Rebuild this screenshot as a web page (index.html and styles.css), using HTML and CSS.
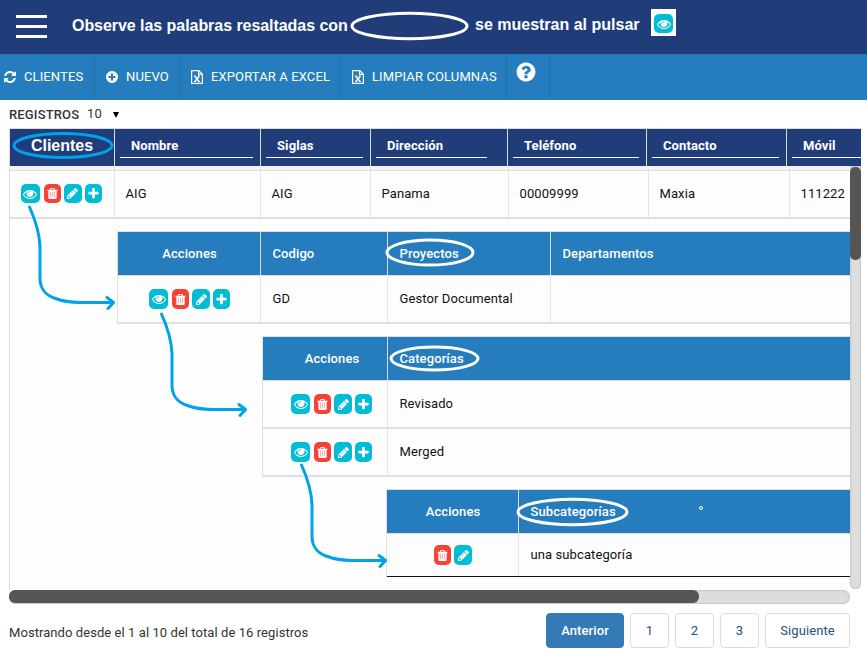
FILE: index.html
```html
<!DOCTYPE html>
<html lang="es">
<head>
<meta charset="utf-8">
<title>Clientes</title>
<link rel="stylesheet" href="styles.css">
</head>
<body>
<svg class="sprite" aria-hidden="true">
  <symbol id="eye" viewBox="0 0 1792 1792"><path d="M1664 960q-152-236-381-353 61 104 61 225 0 185-131.5 316.5t-316.5 131.5-316.5-131.5-131.5-316.5q0-121 61-225-229 117-381 353 133 205 333.5 326.5t434.5 121.5 434.5-121.5 333.5-326.5zm-720-384q0-20-14-34t-34-14q-125 0-214.5 89.5t-89.5 214.5q0 20 14 34t34 14 34-14 14-34q0-86 61-147t147-61q20 0 34-14t14-34zm848 384q0 34-20 69-140 230-376.5 368.5t-499.5 138.5-499.5-139-376.5-368q-20-35-20-69t20-69q140-229 376.5-368t499.5-139 499.5 139 376.5 368q20 35 20 69z"/></symbol>
  <symbol id="trash" viewBox="0 0 1792 1792"><path d="M704 1376v-704q0-14-9-23t-23-9h-64q-14 0-23 9t-9 23v704q0 14 9 23t23 9h64q14 0 23-9t9-23zm256 0v-704q0-14-9-23t-23-9h-64q-14 0-23 9t-9 23v704q0 14 9 23t23 9h64q14 0 23-9t9-23zm256 0v-704q0-14-9-23t-23-9h-64q-14 0-23 9t-9 23v704q0 14 9 23t23 9h64q14 0 23-9t9-23zm-544-992h448l-48-117q-7-9-17-11h-317q-10 2-17 11zm928 32v64q0 14-9 23t-23 9h-96v948q0 83-47 143.5t-113 60.5h-832q-66 0-113-58.5t-47-141.5v-952h-96q-14 0-23-9t-9-23v-64q0-14 9-23t23-9h309l70-167q15-37 54-63t79-26h320q40 0 79 26t54 63l70 167h309q14 0 23 9t9 23z"/><path d="M576 600h640v860H576z" opacity=".6"/></symbol>
  <symbol id="pencil" viewBox="0 0 1792 1792"><path d="M491 1536l91-91-235-235-91 91v107h128v128h107zm523-928q0-22-22-22-10 0-17 7l-542 542q-7 7-7 17 0 22 22 22 10 0 17-7l542-542q7-7 7-17zm-54-192l416 416-832 832h-416v-416zm683 96q0 53-37 90l-166 166-416-416 166-165q36-38 90-38 53 0 91 38l235 234q37 39 37 91z"/></symbol>
  <symbol id="plus" viewBox="0 0 1792 1792"><path d="M1600 736v192q0 40-28 68t-68 28h-416v416q0 40-28 68t-68 28h-192q-40 0-68-28t-28-68v-416h-416q-40 0-68-28t-28-68v-192q0-40 28-68t68-28h416v-416q0-40 28-68t68-28h192q40 0 68 28t28 68v416h416q40 0 68 28t28 68z"/></symbol>
  <symbol id="refresh" viewBox="0 0 1792 1792"><path d="M1639 1056q0 5-1 7-64 268-268 434.5t-478 166.5q-146 0-282.5-55t-243.5-157l-129 129q-19 19-45 19t-45-19-19-45v-448q0-26 19-45t45-19h448q26 0 45 19t19 45-19 45l-137 137q71 66 161 102t187 36q134 0 250-65t186-179q11-17 53-117 8-23 30-23h192q13 0 22.5 9.5t9.5 22.5zm25-800v448q0 26-19 45t-45 19h-448q-26 0-45-19t-19-45 19-45l138-138q-148-137-349-137-134 0-250 65t-186 179q-11 17-53 117-8 23-30 23h-199q-13 0-22.5-9.5t-9.5-22.5v-7q65-268 270-434.5t480-166.5q146 0 284 55.5t245 156.5l130-129q19-19 45-19t45 19 19 45z"/></symbol>
  <symbol id="help" viewBox="0 0 1792 1792"><path d="M1024 1376v-192q0-14-9-23t-23-9h-192q-14 0-23 9t-9 23v192q0 14 9 23t23 9h192q14 0 23-9t9-23zm256-672q0-88-55.5-163t-138.5-116-170-41q-243 0-371 213-15 24 8 42l132 100q7 6 19 6 16 0 25-12 53-68 86-92 34-24 86-24 48 0 85.5 26t37.5 59q0 38-20 61t-68 45q-63 28-115.5 86.5t-52.5 125.5v36q0 14 9 23t23 9h192q14 0 23-9t9-23q0-19 21.5-49.5t54.5-49.5q32-18 49-28.5t46-35 44.5-48 28-60.5 12.5-81zm384 192q0 209-103 385.5t-279.5 279.5-385.5 103-385.5-103-279.5-279.5-103-385.5 103-385.5 279.5-279.5 385.5-103 385.5 103 279.5 279.5 103 385.5z"/></symbol>
  <symbol id="add" viewBox="0 0 12 12"><path fill-rule="evenodd" d="M6 0a6 6 0 1 1 0 12A6 6 0 0 1 6 0zM5 2.6V5H2.6v2H5v2.4h2V7h2.4V5H7V2.6z"/></symbol>
  <symbol id="excel" viewBox="0 0 12 14"><path d="M.6.6h7.2l3.6 3.6v9.2H.6zM7.6.6v3.8h3.8" fill="none" stroke="currentColor" stroke-width="1.2"/><path d="M3.8 6.2l4.2 5.2M8.200 6.200L4 11.400" fill="none" stroke="currentColor" stroke-width="1.500"/><path d="M3 6h2.200M6.800 6H9M3 11.500h2.200M6.800 11.500H9" stroke="currentColor" stroke-width="1"/></symbol>
</svg>

<header class="topbar">
  <div class="menu"><i></i><i></i><i></i></div>
  <p class="hint hint-a">Observe las palabras resaltadas con</p>
  <p class="hint hint-b">se muestran al pulsar</p>
  <span class="sample"><span class="btn view"><svg><use href="#eye"/></svg></span></span>
</header>

<nav class="toolbar">
  <a class="tool t1"><svg><use href="#refresh"/></svg>CLIENTES</a>
  <a class="tool t2"><svg><use href="#add"/></svg>NUEVO</a>
  <a class="tool t3"><svg><use href="#excel"/></svg>EXPORTAR A EXCEL</a>
  <a class="tool t4"><svg><use href="#excel"/></svg>LIMPIAR COLUMNAS</a>
  <a class="tool t5"><svg><use href="#help"/></svg></a>
</nav>

<div class="length"><b>REGISTROS</b><span>10</span><i></i></div>

<main class="grid">
  <div class="head">
    <div class="first">Clientes</div>
    <div><span>Nombre</span></div>
    <div><span>Siglas</span></div>
    <div class="short"><span>Dirección</span></div>
    <div><span>Teléfono</span></div>
    <div><span>Contacto</span></div>
    <div class="last"><span>Móvil</span></div>
  </div>
  <div class="viewport">
    <div class="body">
      <div class="strip cols"><div></div><div></div><div></div><div></div><div></div><div></div><div></div></div>
      <div class="row cols">
        <div class="actions"><span class="btn view"><svg><use href="#eye"/></svg></span><span class="btn del"><svg><use href="#trash"/></svg></span><span class="btn edit"><svg><use href="#pencil"/></svg></span><span class="btn new"><svg><use href="#plus"/></svg></span></div>
        <div>AIG</div><div>AIG</div><div>Panama</div><div>00009999</div><div>Maxia</div><div>111222</div>
      </div>

      <section class="sub projects">
        <div class="sub-head"><div class="act">Acciones</div><div>Codigo</div><div>Proyectos</div><div>Departamentos</div></div>
        <div class="sub-row">
          <div class="actions"><span class="btn view"><svg><use href="#eye"/></svg></span><span class="btn del"><svg><use href="#trash"/></svg></span><span class="btn edit"><svg><use href="#pencil"/></svg></span><span class="btn new"><svg><use href="#plus"/></svg></span></div>
          <div>GD</div><div>Gestor Documental</div><div></div>
        </div>
      </section>

      <section class="sub categories">
        <div class="sub-head"><div class="act">Acciones</div><div>Categorías</div></div>
        <div class="sub-row">
          <div class="actions"><span class="btn view"><svg><use href="#eye"/></svg></span><span class="btn del"><svg><use href="#trash"/></svg></span><span class="btn edit"><svg><use href="#pencil"/></svg></span><span class="btn new"><svg><use href="#plus"/></svg></span></div>
          <div>Revisado</div>
        </div>
        <div class="sub-row">
          <div class="actions"><span class="btn view"><svg><use href="#eye"/></svg></span><span class="btn del"><svg><use href="#trash"/></svg></span><span class="btn edit"><svg><use href="#pencil"/></svg></span><span class="btn new"><svg><use href="#plus"/></svg></span></div>
          <div>Merged</div>
        </div>
      </section>

      <section class="sub subcategories">
        <div class="sub-head"><div class="act">Acciones</div><div>Subcategorías</div></div>
        <div class="sub-row">
          <div class="actions"><span class="btn del"><svg><use href="#trash"/></svg></span><span class="btn edit"><svg><use href="#pencil"/></svg></span></div>
          <div>una subcategoría</div>
        </div>
      </section>
    </div>
    <div class="vbar"><i></i></div>
  </div>
  <div class="hbar"><i></i></div>
</main>

<footer class="foot">
  <p>Mostrando desde el 1 al 10 del total de 16 registros</p>
  <div class="pages"><a class="prev">Anterior</a><a>1</a><a>2</a><a>3</a><a class="next">Siguiente</a></div>
</footer>

<svg class="marks" viewBox="0 0 867 655" aria-hidden="true">
  <g class="white">
    <ellipse cx="409.500" cy="26" rx="57.500" ry="12.800"/>
    <ellipse cx="430" cy="252.500" rx="43" ry="12.500"/>
    <ellipse cx="434.500" cy="358.500" rx="43.500" ry="11.500"/>
    <ellipse cx="572.500" cy="512" rx="54.500" ry="12.800"/>
    <circle class="dot" cx="701" cy="508" r="1.500"/>
  </g>
  <g class="blue">
    <ellipse cx="63" cy="145.500" rx="49" ry="12"/>
    <path id="arrow" d="M29.500 207C34 217 39.500 231 40 247V278C40 288 44 294 54 298C62 301 68 302.500 80 302.500H113M107 297.500L113.500 302.500L108 308.500"/>
    <use href="#arrow" x="132" y="107"/>
    <use href="#arrow" x="272" y="258"/>
  </g>
</svg>
</body>
</html>
```

FILE: styles.css
```css
* { box-sizing: border-box; }
body {
  margin: 0;
  width: 867px;
  height: 655px;
  overflow: hidden;
  position: relative;
  background: #fff;
  color: #111;
  font: 13px/20px Roboto, sans-serif;
  letter-spacing: .1px;
}
p { margin: 0; }
svg { fill: currentColor; flex: none; }
.sprite { position: absolute; width: 0; height: 0; }

.topbar {
  display: flex;
  height: 54px;
  padding-left: 16px;
  background: #203d7a;
  color: #fff;
}
.menu {
  display: flex;
  flex-direction: column;
  gap: 7px;
  width: 31px;
  padding-top: 15px;
}
.menu i { height: 3px; background: #fff; }
.hint {
  font: bold 16px/20px "Liberation Sans", sans-serif;
  letter-spacing: -.05px;
  white-space: nowrap;
}
.hint-a { width: 403px; padding: 16px 0 0 25px; }
.hint-b { width: 201px; padding: 15px 0 0 25px; letter-spacing: 0; }
.sample {
  width: 25px;
  height: 27px;
  margin-top: 9px;
  padding: 5px 3px;
  background: #fff;
}

.toolbar {
  display: flex;
  height: 46px;
  background: #267dbe;
  color: #fff;
  border-top: 1px solid #2375b3;
  letter-spacing: .12px;
}
.tool {
  display: flex;
  align-items: center;
  height: 45px;
  padding-bottom: 1px;
  border-right: 1px solid #216fab;
  white-space: nowrap;
}
.tool svg { width: 12px; height: 14px; }
.t1 { width: 95px; padding-left: 3px; gap: 7px; }
.t1 svg { width: 14px; }
.t2 { width: 85px; padding-left: 11px; gap: 8px; }
.t3 { width: 161px; padding-left: 11px; gap: 8px; }
.t4 { width: 166px; padding-left: 11px; gap: 8px; }
.t5 { width: 43px; height: 42px; padding: 0 0 8px 8px; }
.t5 svg { width: 22px; height: 22px; }

.length {
  display: flex;
  height: 28px;
  padding: 4px 0 0 9px;
  color: #333;
}
.length b { width: 78px; padding-top: 1px; font-weight: 500; letter-spacing: .15px; }
.length span { width: 26px; }
.length i {
  width: 6px;
  height: 6px;
  margin-top: 8px;
  background: #000;
  clip-path: polygon(0 0, 100% 0, 50% 100%);
}

.grid { width: 852px; margin-left: 9px; }
.head {
  display: grid;
  grid-template-columns: 105px 146px 110px 137px 139px 140px 74px;
  height: 38px;
  border-top: 1px solid #ddd;
  border-left: 1px solid #ddd;
  background: #203d7a;
  color: #fff;
  font-weight: 700;
}
.head > div { padding: 7px 7px 0 5px; border-right: 1px solid #ddd; }
.head span {
  display: block;
  height: 22px;
  padding-left: 11px;
  border-bottom: 1px solid #fff;
}
.head .first {
  padding: 7px 0 0;
  text-align: center;
  font: bold 16px/20px "Liberation Sans", sans-serif;
  letter-spacing: 0;
}
.head .short { padding-right: 20px; }
.head .last { padding-right: 0; border-right: 0; }

.viewport { display: flex; height: 424px; }
.body {
  width: 841px;
  border-left: 1px solid #ddd;
  background: #fefefe;
}
.cols {
  display: grid;
  grid-template-columns: 105px 146px 110px 138px 140px 141px 60px;
}
.cols > div { border-right: 1px solid #e5e5e5; }
.cols > div:last-child { border-right: 0; }
.strip { height: 5px; background: #f5f5f5; border-bottom: 1px solid #ddd; }
.row { height: 48px; border-bottom: 2px solid #e0e0e0; background: #fdfdfd; }
.row > div { padding: 13px 0 0 10.5px; white-space: nowrap; }

.actions { display: flex; gap: 3px; }
.btn {
  display: flex;
  align-items: center;
  justify-content: center;
  width: 17px;
  height: 19px;
  border-radius: 5px;
  background: #00bcd4;
  color: #fff;
}
.btn svg { width: 13px; height: 13px; }
.btn.view { width: 19px; }
.btn.view + .btn { margin-left: 1px; }
.btn.view svg { width: 14px; height: 14px; }
.btn.del { background: #f44336; }
.btn.edit { width: 18px; }

.sub { border: 1px solid #e0e0e0; border-right: 0; border-bottom: 0; background: #fdfdfd; }
.sub-head, .sub-row { display: grid; }
.sub-head {
  height: 44px;
  background: #267dbe;
  border-bottom: 1px solid #ddd;
  color: #fff;
  font-weight: 500;
}
.sub-head > div { padding: 12px 0 0 11.5px; border-right: 1px solid #ddd; }
.sub-head > .act { padding-left: 1px; text-align: center; }
.sub-head > div:last-child, .sub-row > div:last-child { border-right: 0; }
.sub-row { height: 48px; border-bottom: 2px solid #e0e0e0; }
.sub-row > div { padding: 13px 0 0 11.5px; border-right: 1px solid #e5e5e5; }
.sub .btn { height: 20px; }
.projects { margin: 12px 0 0 107px; }
.projects .sub-head, .projects .sub-row { grid-template-columns: 143px 127px 163px 1fr; }
.projects .sub-row .actions { padding-left: 31px; }
.categories { margin: 12px 0 0 252px; }
.categories .sub-head, .categories .sub-row { grid-template-columns: 125px 1fr; }
.categories .sub-head .act { padding-left: 14px; }
.categories .sub-row .actions { padding-left: 28px; }
.subcategories { margin: 12px 0 0 376px; }
.subcategories .sub-head, .subcategories .sub-row { grid-template-columns: 132px 1fr; }
.subcategories .sub-row { height: 43px; border-bottom: 1px solid #111; }
.subcategories .sub-row > div { padding-top: 11px; }
.subcategories .sub-row .actions { padding-left: 47px; }

.vbar {
  width: 11px;
  height: 423px;
  border-radius: 0 0 5px 5px;
  background: #ddd;
  box-shadow: inset 0 0 2px #999;
}
.vbar i { display: block; height: 93px; margin-top: 1px; border-radius: 5px; background: #555; }
.hbar {
  width: 841px;
  height: 14px;
  border-radius: 7px;
  background: #ddd;
  box-shadow: inset 0 0 2px #999;
}
.hbar i { display: block; width: 690px; height: 13px; border-radius: 6px; background: #555; }

.foot { display: flex; padding-left: 9px; color: #333; }
.foot p { width: 537px; padding: 19px 0 0; letter-spacing: .07px; }
.pages { display: flex; padding-top: 9px; }
.pages a {
  width: 39px;
  height: 35px;
  margin-right: 6px;
  border: 1px solid #ddd;
  border-radius: 4px;
  text-align: center;
  line-height: 33px;
  color: #23527c;
}
.pages a.prev {
  width: 78px;
  border-color: #337ab7;
  background: #337ab7;
  color: #fff;
  font-weight: 500;
}
.pages a.next { width: 85px; }

.marks { position: absolute; left: 0; top: 0; width: 867px; height: 655px; pointer-events: none; }
.marks g { fill: none; stroke-width: 3; }
.white { stroke: #fff; }
.marks .dot { stroke-width: 1; }
.blue { stroke: #00a2e8; stroke-linecap: round; stroke-linejoin: round; }
```
